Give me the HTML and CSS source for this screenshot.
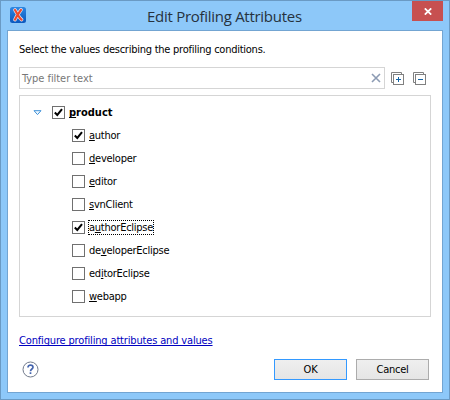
FILE: index.html
```html
<!DOCTYPE html>
<html lang="en">
<head>
<meta charset="utf-8">
<title>Edit Profiling Attributes</title>
<link rel="stylesheet" href="styles.css">
</head>
<body>
<div class="window">
  <header class="titlebar">
    <svg class="logo" width="16" height="16" viewBox="0 0 16 16">
      <defs><linearGradient id="g" x1="0" y1="0" x2="0" y2="1"><stop offset="0" stop-color="#2d87e2"/><stop offset="1" stop-color="#0c58bd"/></linearGradient></defs>
      <rect width="16" height="16" rx="2.5" fill="url(#g)"/>
      <path d="M5 3C7 6 9 11 11.6 12.6M11 2.8C9.5 5 6.5 9 5 12.6" fill="none" stroke="#dbe4f5" stroke-width="3.6" stroke-linecap="round"/>
      <path d="M5 3C7 6 9 11 11.6 12.6M11 2.8C9.5 5 6.5 9 5 12.6" fill="none" stroke="#f04a2c" stroke-width="2.2" stroke-linecap="round"/>
    </svg>
    <h1 class="title">Edit Profiling Attributes</h1>
    <div class="close"><svg width="8" height="7" viewBox="0 0 8 7"><path d="M.8.4 7.2 6.6M7.2.4.8 6.6" stroke="#fff" stroke-width="1.8"/></svg></div>
  </header>
  <main class="client">
    <p class="intro">Select the values describing the profiling conditions.</p>
    <div class="filter-row">
      <div class="filter"><span class="hint">Type filter text</span><svg width="10" height="10" viewBox="0 0 10 10"><path d="M1 1 9 9M9 1 1 9" stroke="#8c9bb3" stroke-width="1.6"/></svg></div>
      <svg class="expand" width="13" height="13" viewBox="0 0 13 13"><path d="M2.5 10.5H.5V.5H10.5V2.5" fill="none" stroke="#808080"/><rect x="2.5" y="2.5" width="10" height="10" fill="#fff" stroke="#808080"/><path d="M5 7.5H10M7.5 5V10" stroke="#1464a5"/></svg>
      <svg class="collapse" width="13" height="13" viewBox="0 0 13 13"><path d="M2.5 10.5H.5V.5H10.5V2.5" fill="none" stroke="#808080"/><rect x="2.5" y="2.5" width="10" height="10" fill="#fff" stroke="#808080"/><path d="M5 7.5H10" stroke="#1464a5"/></svg>
    </div>
    <div class="tree">
      <div class="row parent"><svg class="arrow" width="9" height="6" viewBox="0 0 9 6"><path d="M1 .7H8L4.5 4.6Z" fill="#f2faff" stroke="#3f91d8"/></svg><span class="box"><svg width="9" height="9" viewBox="0 0 9 9"><path d="M.8 4.5 3.3 7 8 1.2" fill="none" stroke="#000" stroke-width="2"/></svg></span><span class="label product"><u>p</u>roduct</span></div>
      <div class="row"><span class="box"><svg width="9" height="9" viewBox="0 0 9 9"><path d="M.8 4.5 3.3 7 8 1.2" fill="none" stroke="#000" stroke-width="2"/></svg></span><span class="label"><u>a</u>uthor</span></div>
      <div class="row"><span class="box"></span><span class="label"><u>d</u>eveloper</span></div>
      <div class="row"><span class="box"></span><span class="label"><u>e</u>ditor</span></div>
      <div class="row"><span class="box"></span><span class="label"><u>s</u>vnClient</span></div>
      <div class="row"><span class="box"><svg width="9" height="9" viewBox="0 0 9 9"><path d="M.8 4.5 3.3 7 8 1.2" fill="none" stroke="#000" stroke-width="2"/></svg></span><span class="label focused">a<u>u</u>thorEclipse</span></div>
      <div class="row"><span class="box"></span><span class="label">de<u>v</u>eloperEclipse</span></div>
      <div class="row"><span class="box"></span><span class="label">ed<u>i</u>torEclipse</span></div>
      <div class="row"><span class="box"></span><span class="label"><u>w</u>ebapp</span></div>
    </div>
    <a class="link">Configure profiling attributes and values</a>
    <footer class="footer">
      <svg class="help" width="17" height="17" viewBox="0 0 17 17"><circle cx="8.5" cy="8.5" r="7.5" fill="#fff" stroke="#727b8c"/><path d="M6 6.4C6 3.3 11 3.5 11 6.3C11 8 8.5 8.1 8.5 10.3M8.5 11.3V13" fill="none" stroke="#4464ae" stroke-width="1.7"/></svg>
      <div class="button ok">OK</div>
      <div class="button">Cancel</div>
    </footer>
  </main>
</div>
</body>
</html>
```

FILE: styles.css
```css
* { box-sizing: border-box; }
body { margin: 0; font: 11px/15px "DejaVu Sans Condensed", "DejaVu Sans", sans-serif; font-stretch: condensed; letter-spacing: -.25px; color: #000; }
svg { display: block; flex: none; }
.window { width: 450px; height: 400px; background: #8dc8f9; border: 1px solid #6a9ac4; padding: 0 6px; }
.titlebar { display: flex; align-items: flex-start; height: 29px; }
.logo { margin: 6px 0 0 3px; }
.title { flex: 1; margin: 5px 0 0 121px; font: 15px/20px "Open Sans", "Noto Sans", sans-serif; letter-spacing: -.28px; color: #26323e; white-space: nowrap; }
.close { width: 31px; height: 20px; background: #c75050; display: flex; align-items: center; justify-content: center; }
.client { width: 436px; height: 363px; background: #fff; border: 1px solid #73a5d2; padding: 10px 11px; }
.intro { margin: 0; height: 26px; line-height: 18px; white-space: nowrap; }
.filter-row { display: flex; align-items: center; height: 22px; }
.filter { width: 366px; height: 22px; border: 1px solid #d5d5d5; padding: 0 3px 0 2px; display: flex; align-items: center; justify-content: space-between; }
.hint { color: #777; letter-spacing: -.05px; }
.expand { margin-left: 6px; }
.collapse { margin-left: 9px; }
.tree { width: 412px; height: 222px; margin-top: 6px; border: 1px solid #d5d5d5; padding: 5px 0 0 13px; }
.row { display: flex; align-items: center; height: 23px; padding-left: 39px; }
.parent { padding-left: 0; }
.arrow { margin-right: 10px; }
.box { width: 13px; height: 13px; border: 1px solid #707070; display: flex; align-items: center; justify-content: center; flex: none; }
.label { margin-left: 3px; padding: 0 1px; height: 15px; line-height: 16px; white-space: nowrap; }
.label u { text-underline-offset: 1px; text-decoration-skip-ink: none; }
.product { font-weight: bold; letter-spacing: 0; line-height: 15px; }
.focused { padding: 0; border: 1px dotted #000; line-height: 14px; }
.link { display: block; margin-top: 16px; height: 16px; line-height: 16px; letter-spacing: -.16px; color: #0000c0; text-decoration: underline; text-decoration-skip-ink: none; text-underline-offset: 1px; white-space: nowrap; }
.footer { display: flex; margin-top: 10px; padding: 0 2px 0 3px; }
.help { margin: 2px auto 0 0; }
.button { width: 73px; height: 21px; border: 1px solid #acacac; background: linear-gradient(#efefef, #e5e5e5); text-align: center; line-height: 19px; margin-left: 9px; }
.ok { border-color: #3399ff; }
```
